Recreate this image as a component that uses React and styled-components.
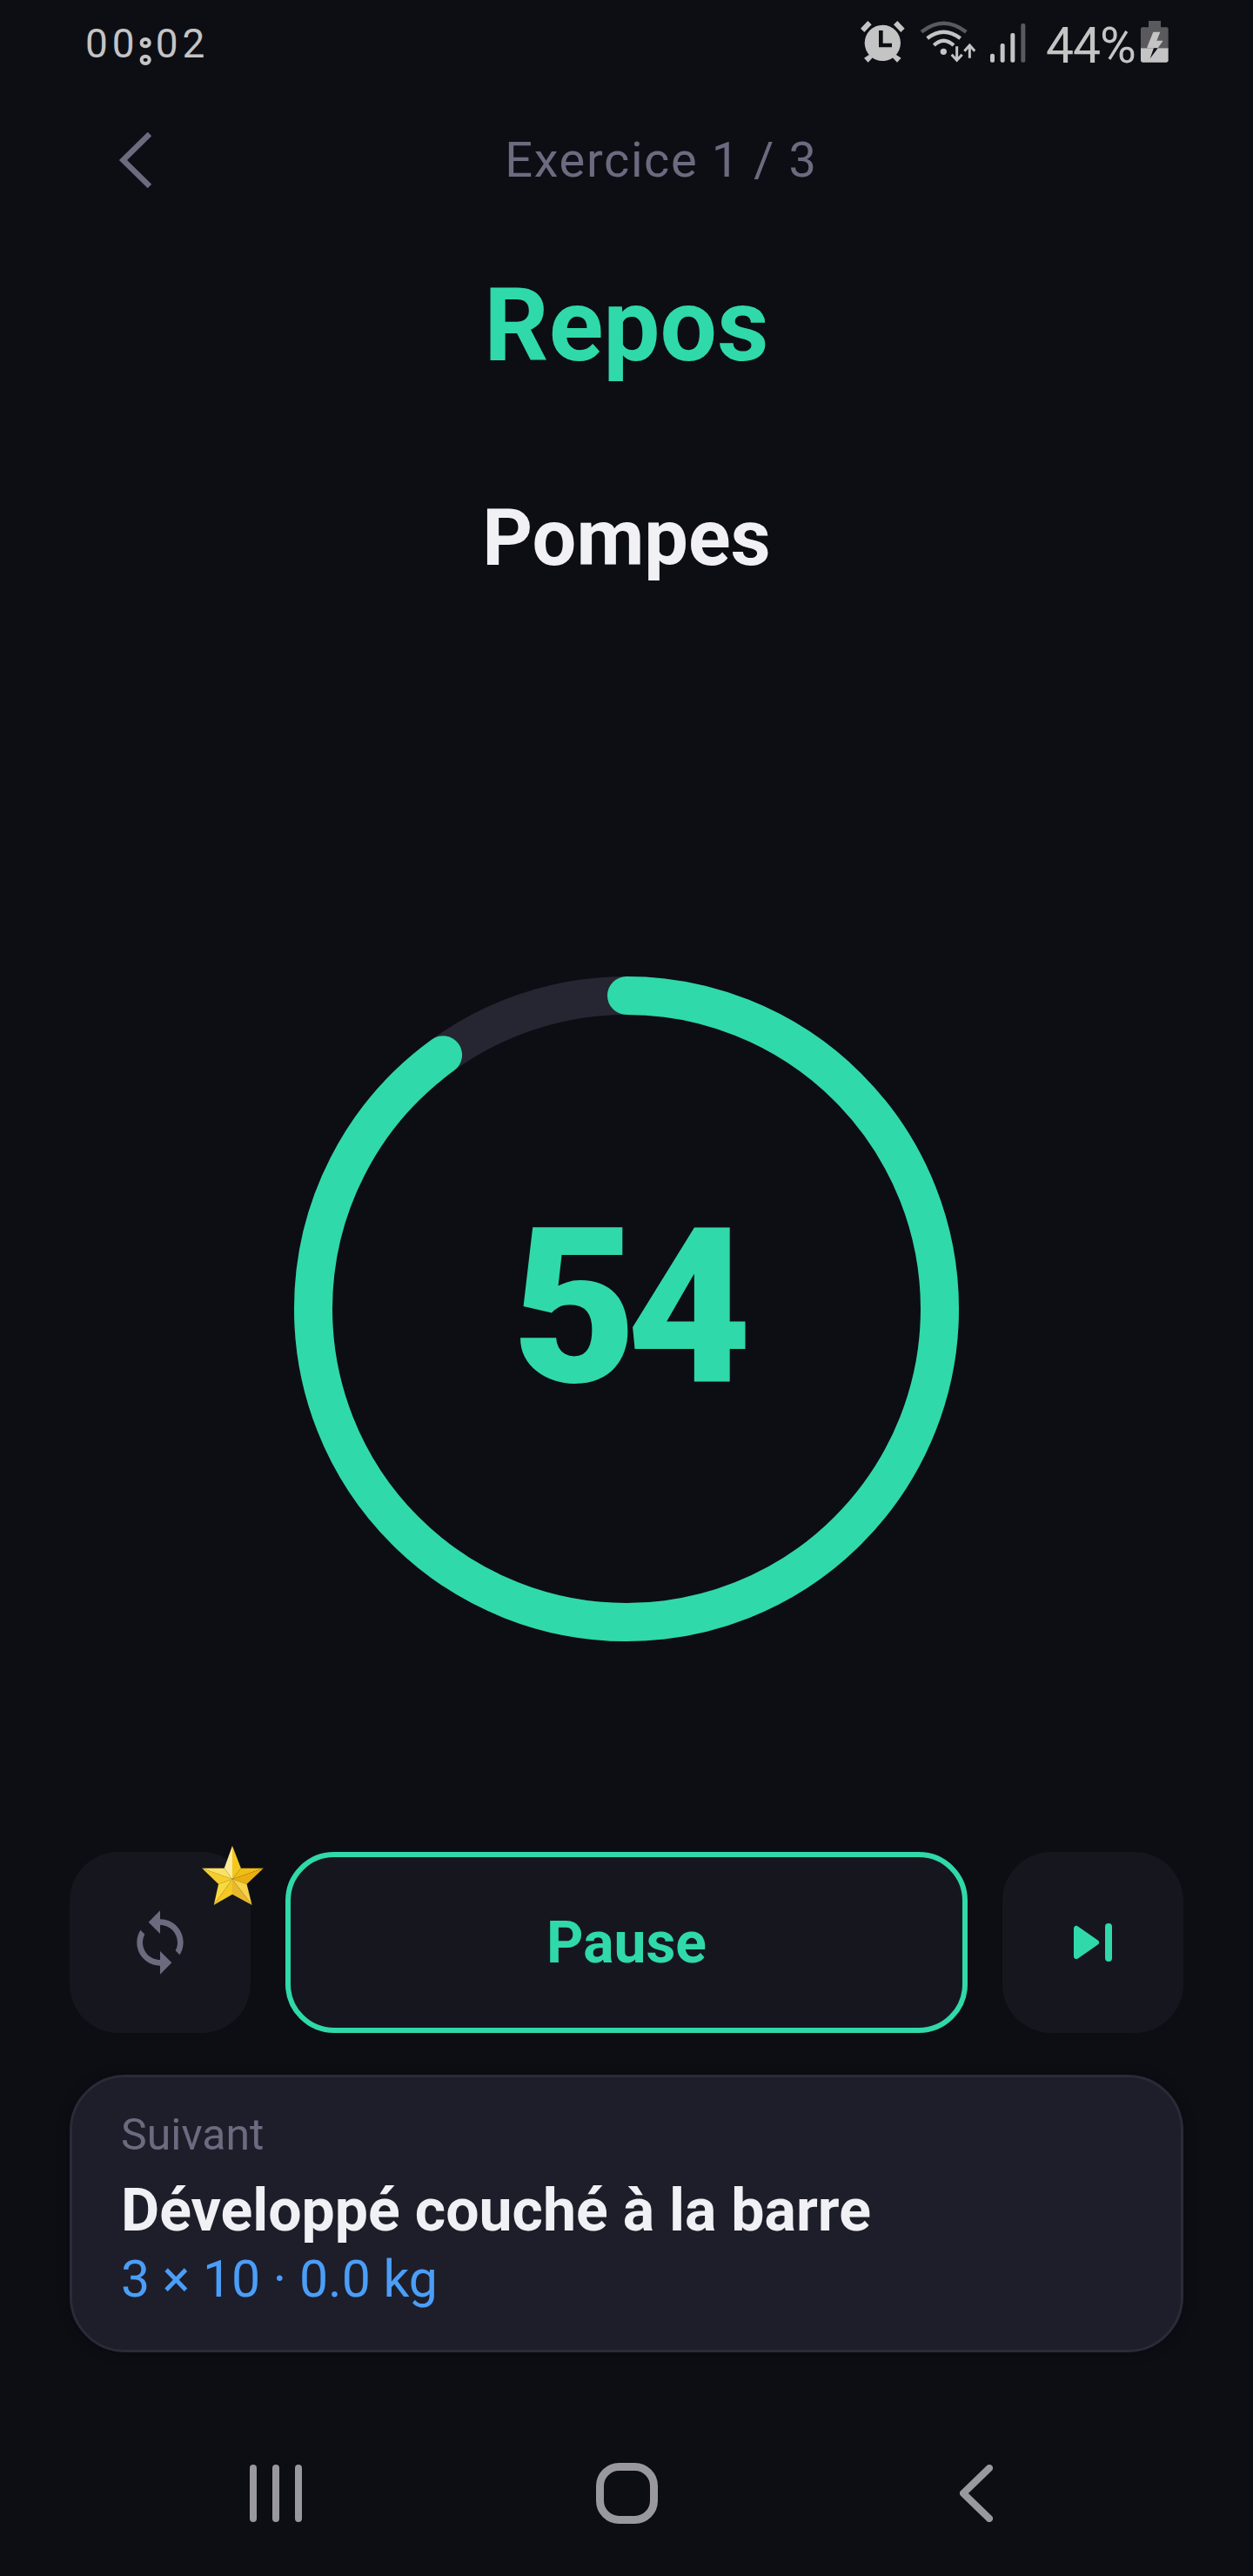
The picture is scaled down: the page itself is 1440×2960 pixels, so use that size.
import React from "react";
import styled, { createGlobalStyle } from "styled-components";

const GlobalStyle = createGlobalStyle`
  html, body {
    margin: 0;
    padding: 0;
    background: #0d0e14;
  }
  * {
    box-sizing: border-box;
  }
`;

const Page = styled.div`
  width: 1440px;
  height: 2960px;
  background: #0d0e14;
  font-family: Roboto, "Liberation Sans", sans-serif;
  display: flex;
  flex-direction: column;
  overflow: hidden;
`;

const StatusBar = styled.div`
  height: 96px;
  padding: 24px 97px 24px 98px;
  display: flex;
  justify-content: space-between;
  align-items: flex-end;
  color: #c4c4c4;
`;

const Clock = styled.span`
  font-size: 46px;
  line-height: 48px;
  letter-spacing: 5px;
  transform: translateY(2px);
`;

const ClockColon = styled.span`
  display: inline-block;
  font-size: 50px;
  font-weight: 900;
  letter-spacing: 0;
  margin-right: 4px;
  color: transparent;
  -webkit-text-stroke: 4px #c4c4c4;
  transform: translateY(7px);
`;

const StatusIcons = styled.div`
  display: flex;
  align-items: flex-end;
`;

const StatusIcon = styled.svg`
  display: block;
  margin-right: ${(p) => p.$gap || 0}px;
`;

const Battery = styled.span`
  width: 100px;
  white-space: nowrap;
  font-size: 57px;
  line-height: 48px;
  letter-spacing: -1px;
  margin-right: 9px;
  transform: translateY(5px);
`;

const Header = styled.div`
  height: 176px;
  padding: 0 80px;
  display: flex;
  align-items: center;
`;

const BackButton = styled.div`
  width: 160px;
  padding-left: 56px;
  display: flex;
  align-items: center;
`;

const Counter = styled.div`
  flex: 1;
  margin-right: 80px;
  text-align: center;
  font-size: 56px;
  line-height: 72px;
  letter-spacing: 1.6px;
  color: #6b6b80;
`;

const Phase = styled.h1`
  margin: 36px 0 0;
  text-align: center;
  font-size: 116px;
  line-height: 132px;
  font-weight: 700;
  color: #30d9a9;
`;

const ExerciseName = styled.h2`
  margin: 127px 0 0;
  text-align: center;
  font-size: 90px;
  line-height: 104px;
  font-weight: 700;
  color: #f0f0f5;
`;

const Timer = styled.div`
  margin: 451px auto 0;
  width: 764px;
  height: 764px;
  display: grid;
  place-items: center;
  & > * {
    grid-area: 1 / 1;
  }
`;

const Seconds = styled.div`
  font-family: Roboto, "Liberation Sans", sans-serif;
  font-size: 248px;
  font-weight: 900;
  line-height: 1;
  letter-spacing: -12px;
  color: #30d9a9;
`;

const Controls = styled.div`
  margin-top: 242px;
  padding: 0 80px;
  display: flex;
  gap: 40px;
`;

const IconButton = styled.div`
  position: relative;
  width: 208px;
  height: 208px;
  border-radius: 56px;
  background: #16171e;
  display: flex;
  align-items: center;
  justify-content: center;
`;

const StarBadge = styled.svg`
  position: absolute;
  left: 152px;
  top: -7px;
`;

const PauseButton = styled.div`
  flex: 1;
  height: 208px;
  border-radius: 56px;
  border: 6px solid #30d9a9;
  background: #16171e;
  display: flex;
  align-items: center;
  justify-content: center;
  font-size: 66px;
  font-weight: 700;
  color: #30d9a9;
`;

const NextCard = styled.div`
  margin: 48px 80px 0;
  padding: 33px 56px 46px;
  border: 3px solid #2a2a38;
  border-radius: 64px;
  background: #1e1e2a;
  box-shadow: 0 0 14px rgba(0, 0, 0, 0.3);
`;

const NextLabel = styled.div`
  font-size: 50px;
  line-height: 66px;
  color: #6b6b80;
`;

const NextTitle = styled.div`
  margin-top: 10px;
  font-size: 68px;
  line-height: 88px;
  font-weight: 700;
  color: #f0f0f5;
`;

const NextMeta = styled.div`
  font-size: 59px;
  line-height: 70px;
  color: #4b9ef8;
`;

const NavBar = styled.div`
  margin-top: 127px;
  display: grid;
  grid-template-columns: repeat(3, 402px);
  justify-content: center;
  justify-items: center;
  align-items: center;
  height: 70px;
`;

const RingProgress = ({ value }) => {
  const radius = 360;
  const length = 2 * Math.PI * radius;
  return (
    <svg width="764" height="764" viewBox="0 0 764 764">
      <circle cx="382" cy="382" r={radius} fill="none" stroke="#262633" strokeWidth="44" />
      <circle
        cx="382"
        cy="382"
        r={radius}
        fill="none"
        stroke="#30d9a9"
        strokeWidth="44"
        strokeLinecap="round"
        strokeDasharray={`${length * value} ${length}`}
        transform="rotate(-90 382 382)"
      />
    </svg>
  );
};

const AlarmIcon = () => (
  <StatusIcon $gap={17} width="51" height="48" viewBox="88 72 153 144">
    <path d="M88 98 L113 72 L126 85 L101 111Z M240 98 L215 72 L202 85 L227 111Z" fill="#c4c4c4" />
    <path d="M100 200 L118 188 L130 198 L114 215Z M228 200 L210 188 L198 198 L214 215Z" fill="#c4c4c4" />
    <circle cx="164" cy="148" r="62" fill="#c4c4c4" />
    <path d="M158 105 V156 H196" fill="none" stroke="#0d0e14" strokeWidth="14" />
  </StatusIcon>
);

const WifiIcon = () => (
  <StatusIcon $gap={17} width="64" height="48" viewBox="290 72 192 144">
    <path d="M296 110 Q372 50 450 110" fill="none" stroke="#5a5a5e" strokeWidth="13" />
    <path d="M316 132 Q372 88 430 132" fill="none" stroke="#c4c4c4" strokeWidth="13" />
    <path d="M339 156 Q372 124 407 156" fill="none" stroke="#c4c4c4" strokeWidth="13" />
    <circle cx="372" cy="178" r="11" fill="#c4c4c4" />
    <path d="M418 160 V205 M400 188 L418 208 L436 188" fill="none" stroke="#c4c4c4" strokeWidth="9" />
    <path d="M462 200 V156 M444 176 L462 156 L480 176" fill="none" stroke="#c4c4c4" strokeWidth="9" />
  </StatusIcon>
);

const SignalIcon = () => (
  <StatusIcon $gap={23} width="41" height="45" viewBox="535 81 123 135">
    <rect x="535" y="185" width="15" height="30" rx="6" fill="#c4c4c4" />
    <rect x="570" y="150" width="15" height="65" rx="6" fill="#c4c4c4" />
    <rect x="605" y="114" width="15" height="101" rx="6" fill="#c4c4c4" />
    <rect x="641" y="81" width="15" height="134" rx="6" fill="#5a5a5e" />
  </StatusIcon>
);

const BatteryIcon = () => (
  <StatusIcon width="32" height="48" viewBox="1053 72 96 144">
    <path d="M1080 72 H1122 V94 H1142 Q1148 94 1148 100 V166 H1053 V100 Q1053 94 1059 94 H1080Z" fill="#5a5a5e" />
    <path d="M1053 166 H1148 V208 Q1148 215 1141 215 H1060 Q1053 215 1053 208Z" fill="#c4c4c4" />
    <path d="M1096 110 H1120 L1108 140 H1130 L1112 166 H1075 L1076 160Z" fill="#c4c4c4" />
    <path d="M1098 166 H1112 L1085 202Z" fill="#0d0e14" />
  </StatusIcon>
);

const StarIcon = () => (
  <StarBadge width="71" height="68" viewBox="515 92 213 205">
    <path d="M620 92 L650 170 L620 207Z" fill="#f3c71c" />
    <path d="M620 92 L592 170 L620 207Z" fill="#fdeb9a" />
    <path d="M728 170 L650 170 L620 207Z" fill="#f0be14" />
    <path d="M728 170 L670 225 L620 207Z" fill="#e8ae12" />
    <path d="M688 297 L670 225 L620 207Z" fill="#f6d34a" />
    <path d="M688 297 L620 260 L620 207Z" fill="#eab82c" />
    <path d="M556 297 L620 260 L620 207Z" fill="#f5c822" />
    <path d="M556 297 L572 225 L620 207Z" fill="#f9d93f" />
    <path d="M515 170 L572 225 L620 207Z" fill="#f6ce2c" />
    <path d="M515 170 L592 170 L620 207Z" fill="#fbe263" />
  </StarBadge>
);

const SyncIcon = () => (
  <svg width="80" height="80" viewBox="0 0 24 24">
    <path
      fill="#6b6b80"
      d="M12 4V1L8 5l4 4V6c3.31 0 6 2.69 6 6 0 1.01-.25 1.97-.7 2.8l1.46 1.46C19.54 15.03 20 13.57 20 12c0-4.42-3.58-8-8-8zm0 14c-3.31 0-6-2.69-6-6 0-1.01.25-1.97.7-2.8L5.24 7.74C4.46 8.97 4 10.43 4 12c0 4.42 3.58 8 8 8v3l4-4-4-4v3z"
    />
  </svg>
);

const SkipIcon = () => (
  <svg width="44" height="44" viewBox="0 0 44 44">
    <path d="M3 6 V38 L26 22Z" fill="#30d9a9" stroke="#30d9a9" strokeWidth="6" strokeLinejoin="round" />
    <rect x="36" y="0" width="8" height="44" rx="4" fill="#30d9a9" />
  </svg>
);

const NavMenu = () => (
  <svg width="62" height="66" viewBox="0 0 62 66">
    <path d="M4 4 V62 M30 4 V62 M56 4 V62" stroke="#98989e" strokeWidth="8" strokeLinecap="round" />
  </svg>
);

const NavHome = () => (
  <svg width="71" height="70" viewBox="0 0 71 70">
    <rect x="4.5" y="4.5" width="62" height="61" rx="22" fill="none" stroke="#98989e" strokeWidth="9" />
  </svg>
);

const NavBack = () => (
  <svg width="38" height="66" viewBox="0 0 38 66">
    <path d="M34 4 L4 33 L34 62" fill="none" stroke="#98989e" strokeWidth="8" strokeLinecap="round" strokeLinejoin="round" />
  </svg>
);

function App() {
  return (
    <Page>
      <GlobalStyle />
      <StatusBar>
        <Clock>
          00<ClockColon>:</ClockColon>02
        </Clock>
        <StatusIcons>
          <AlarmIcon />
          <WifiIcon />
          <SignalIcon />
          <Battery>44%</Battery>
          <BatteryIcon />
        </StatusIcons>
      </StatusBar>

      <Header>
        <BackButton>
          <svg width="38" height="65" viewBox="0 0 38 65">
            <path d="M36 2 L5.5 32 L36 62" fill="none" stroke="#6b6b80" strokeWidth="6.5" />
          </svg>
        </BackButton>
        <Counter>Exercice 1 / 3</Counter>
      </Header>

      <Phase>Repos</Phase>
      <ExerciseName>Pompes</ExerciseName>

      <Timer>
        <RingProgress value={0.9} />
        <Seconds>54</Seconds>
      </Timer>

      <Controls>
        <IconButton>
          <SyncIcon />
          <StarIcon />
        </IconButton>
        <PauseButton>Pause</PauseButton>
        <IconButton>
          <SkipIcon />
        </IconButton>
      </Controls>

      <NextCard>
        <NextLabel>Suivant</NextLabel>
        <NextTitle>Développé couché à la barre</NextTitle>
        <NextMeta>3 × 10 · 0.0 kg</NextMeta>
      </NextCard>

      <NavBar>
        <NavMenu />
        <NavHome />
        <NavBack />
      </NavBar>
    </Page>
  );
}

export default App;
